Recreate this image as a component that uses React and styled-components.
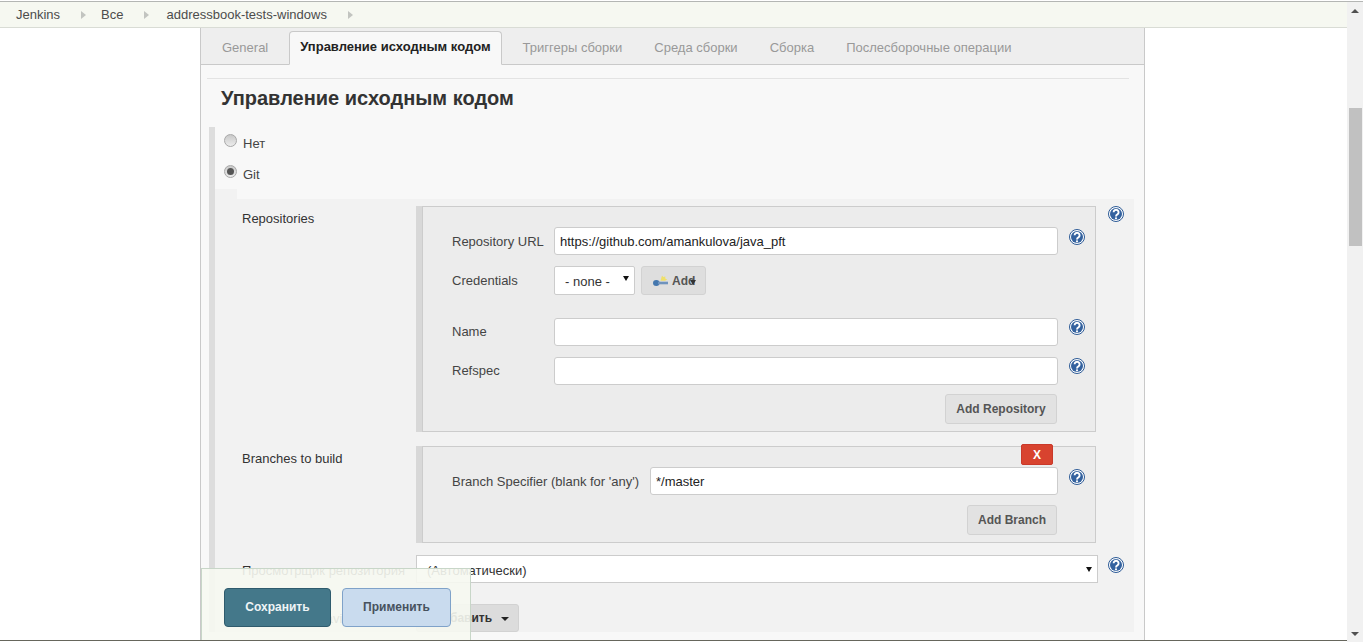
import React from "react";
import styled, { createGlobalStyle } from "styled-components";

const Global = createGlobalStyle`
  html, body { margin: 0; padding: 0; height: 642px; overflow: hidden; background: #fff; }
  body { font-family: "Liberation Sans", Arial, sans-serif; font-size: 13px; color: #333; }
  * { box-sizing: border-box; }
`;

const Shell = styled.div`display: flex; flex-direction: column; width: 1363px; height: 642px;`;
const TopEdge = styled.div`height: 2px; background: #fff; border-bottom: 1px solid #b4b6b4; flex: none;`;
const Body = styled.div`display: flex; flex: 1; min-height: 0;`;
const Viewport = styled.div`display: flex; flex-direction: column; flex: 1; min-width: 0;`;

const Breadcrumbs = styled.nav`
  height: 26px; flex: none; display: flex; align-items: center; padding: 0 0 0 16px;
  background: #f6f8f1; border-bottom: 1px solid #d9dcd5; font-size: 13px; color: #4c4c4c;
`;
const Crumb = styled.span`display: flex; align-items: center;`;
const CrumbArrow = styled.i`
  width: 0; height: 0; margin: 1px ${p => p.$after || 15}px 0 21px; border-style: solid;
  border-width: 4px 0 4px 5px; border-color: transparent transparent transparent #c2c4c0;
`;

const Main = styled.main`flex: 1; min-height: 0; position: relative; overflow: hidden; background: #fff;`;
const BottomEdge = styled.div`height: 2px; flex: none; background: #fff; border-top: 1px solid #66665c;`;

const Panel = styled.div`
  width: 945px; margin-left: 200px; height: 100%; background: #f8f8f8;
  border-left: 1px solid #c9c9c9; border-right: 1px solid #c9c9c9;
`;
const Tabs = styled.div`
  height: 37px; display: flex; align-items: flex-end; gap: 10px; padding: 0 0 0 10px;
  background: #eee; border-bottom: 1px solid #c9c9c9; font-size: 13px;
`;
const Tab = styled.div`
  height: ${p => (p.$active ? "34px" : "33px")}; padding: 0 10px ${p => (p.$active ? "3px" : "4px")}; display: flex; align-items: center;
  border: 1px solid ${p => (p.$active ? "#c9c9c9" : "transparent")};
  border-bottom: ${p => (p.$active ? "1px solid #f8f8f8" : "none")};
  border-radius: 4px 4px 0 0; margin-bottom: -1px;
  background: ${p => (p.$active ? "#f8f8f8" : "transparent")};
  color: ${p => (p.$active ? "#222" : "#999")};
  font-weight: ${p => (p.$active ? 700 : 400)};
`;
const Rule = styled.div`height: 1px; margin: 13px 15px 0 6px; background: #e3e3e3;`;
const Heading = styled.h2`
  margin: 0; padding: 8px 0 0 20px; height: 48px; font-size: 20px; line-height: 23px; font-weight: 700; color: #333;
`;
const Section = styled.section`
  margin-left: 8px; width: 925px; border-left: 6px solid #ddd;
`;
const RadioRow = styled.div`
  height: 31px; display: flex; align-items: center; padding-left: 9px; gap: 6px; color: #444;
`;
const Radio = styled.span`
  width: 13px; height: 13px; border-radius: 50%; flex: none; margin-bottom: 4px;
  border: 1px solid #a8a8a8; display: flex; align-items: center; justify-content: center;
  background: linear-gradient(#c9c9c9, #ececec);
  &::after {
    content: ""; width: 7px; height: 7px; border-radius: 50%;
    background: ${p => (p.$on ? "#555" : "transparent")};
  }
`;
const RadioText = styled.span`padding-top: 2px;`;
const Notch = styled.div`width: 22px; height: 10px; background: #f2f2f2;`;
const Block = styled.div`
  display: grid; grid-template-columns: 174px 682px 37px; background: #f2f2f2;
  padding: 7px 0 0 27px; row-gap: 0;
`;
const FieldLabel = styled.div`padding-top: ${p => p.$pt || 5}px; color: #333; line-height: 16px;`;
const Cell = styled.div`padding-bottom: ${p => p.$pb || 0}px;`;
const Repeater = styled.div`
  display: flex; gap: 1px; width: 680px; border-left: 6px solid #d8d8d8; 
`;
const Box = styled.div`
  flex: 1; position: relative; background: #ececec; border: 1px solid #ccc;
  padding: 20px 37px 7px 29px;
`;
const FormRow = styled.div`
  display: grid; grid-template-columns: ${p => p.$label || 102}px 1fr; position: relative;
  margin-bottom: ${p => p.$mb || 0}px; align-items: center; color: #444;
`;
const RowLabel = styled.span`padding-bottom: ${p => (p.$lift ? 2 : 0)}px;`;
const Input = styled.input`
  width: 100%; height: 28px; border: 1px solid #ccc; border-radius: 3px; background: #fff;
  padding: 0 5px; font: 13px "Liberation Sans", Arial, sans-serif; color: #222; outline: none; display: block;
`;
const Controls = styled.div`display: flex; gap: 6px;`;
const SelectWrap = styled.div`
  position: relative; width: ${p => p.$w}; height: ${p => p.$h}px; display: block;
  &::after {
    content: ""; position: absolute; right: 6px; top: ${p => p.$arrowTop}px; width: 0; height: 0;
    border-style: solid; border-width: 5px 3px 0 3px; border-color: #111 transparent transparent transparent;
    pointer-events: none;
  }
`;
const Select = styled.select`
  appearance: none; width: 100%; height: 100%; border: 1px solid #ccc; background: #fff; border-radius: ${p => p.$r || 0}px;
  padding: ${p => p.$pt || 1}px 0 0 10px; font: 13px "Liberation Sans", Arial, sans-serif; color: #333; outline: none;
`;
const Button = styled.button`
  display: flex; align-items: center; justify-content: center; height: ${p => p.$h || 30}px; width: ${p => p.$w || 90}px; padding: 0;
  border: 1px solid #d2d2d2; border-radius: 3px; background: #e2e2e2; color: #555;
  font: 700 12px "Liberation Sans", Arial, sans-serif;
`;
const AddKey = styled(Button)`
  position: relative; justify-content: flex-start; padding: 0 0 0 11px; width: 65px; background: #dedede; gap: 4px;
`;
const KeyCaret = styled.i`
  position: absolute; left: 48px; top: 13px; width: 0; height: 0; border-style: solid;
  border-width: 5px 3.5px 0 3.5px; border-color: #333 transparent transparent transparent;
`;
const ActionRow = styled.div`display: flex; justify-content: flex-end; margin: ${p => p.$mt}px 1px 0 0;`;
const RemoveButton = styled.button`
  position: absolute; right: 42px; top: -3px; width: 32px; height: 21px; border: 1px solid #c9392a;
  border-radius: 2px; background: #d8432f; color: #fff; font: 700 12px "Liberation Sans", Arial, sans-serif; padding: 0;
`;
const HelpSlot = styled.span`
  display: block; width: 16px; height: 16px; position: absolute; right: -27px; top: ${p => p.$top}px;
`;
const OuterHelp = styled.span`display: block; width: 16px; height: 16px; margin: ${p => p.$mt}px 0 0 10px;`;
const AddDropdown = styled.button`
  display: flex; align-items: center; gap: 9px; width: 103px; height: 28px; padding: 0 0 0 17px;
  background: #dcdcdc; border: 1px solid #d2d2d2; border-radius: 3px; color: #333;
  font: 700 12px "Liberation Sans", Arial, sans-serif;
  &::after {
    content: ""; width: 0; height: 0; border-style: solid; border-width: 4px 4px 0 4px;
    border-color: #222 transparent transparent transparent; margin-top: 2px;
  }
`;

const SaveBar = styled.div`
  position: absolute; left: 201px; bottom: 0; width: 270px; height: 72px;
  background: rgba(246, 248, 241, 0.9); border: 1px solid #c8d6c8; border-bottom: none;
  display: flex; gap: 11px; padding: 19px 0 0 22px;
`;
const SaveButton = styled.button`
  height: 39px; width: ${p => p.$w}px; border-radius: 4px; padding: 0 0 2px; font: 700 12px "Liberation Sans", Arial, sans-serif;
  background: ${p => (p.$primary ? "#44788a" : "#c9dbee")};
  border: 1px solid ${p => (p.$primary ? "#2f5b6d" : "#7fa2c9")};
  color: ${p => (p.$primary ? "#eef4f6" : "#47525e")};
`;

const Scrollbar = styled.div`
  width: 16px; flex: none; background: #f1f1f1; display: flex; flex-direction: column; align-items: center;
`;
const ScrollButton = styled.div`
  height: 17px; width: 100%; flex: none; display: flex; align-items: center; justify-content: center;
  &::after {
    content: ""; width: 0; height: 0; border-style: solid;
    border-width: ${p => (p.$up ? "0 4px 4px 4px" : "4px 4px 0 4px")};
    border-color: ${p => (p.$up ? "transparent transparent #505050 transparent" : "#505050 transparent transparent transparent")};
  }
`;
const ScrollTrack = styled.div`flex: 1; width: 100%; padding: 89px 1px 0 2px;`;
const ScrollThumb = styled.div`height: 138px; background: #c1c1c1;`;

const HelpIcon = () => (
  <svg width="16" height="16" viewBox="0 0 16 16" aria-hidden="true">
    <circle cx="8" cy="8" r="7.5" fill="#fff" stroke="#2c5a96" strokeWidth="1" />
    <circle cx="8" cy="8" r="6" fill="#34629f" />
    <path d="M5.6 6.300a2.500 2.500 0 1 1 3.800 2.100c-.9.5-1.400 1-1.400 2" fill="none" stroke="#fff" strokeWidth="1.900" />
    <circle cx="8" cy="12.300" r="1.100" fill="#fff" />
  </svg>
);

const KeyIcon = () => (
  <svg width="15" height="12" viewBox="0 0 15 12" aria-hidden="true">
    <path d="M9 0.500l1.200 1.500 2.200-.6-.2 2 2 1-2 1.400H7.500z" fill="#efe06a" />
    <ellipse cx="3.300" cy="8" rx="3.300" ry="3" fill="#4477ae" />
    <rect x="5" y="6.700" width="10" height="2.600" fill="#6f93bd" />
  </svg>
);

export default function App() {
  return (
    <Shell>
      <Global />
      <TopEdge />
      <Body>
        <Viewport>
          <Breadcrumbs>
            <Crumb>Jenkins<CrumbArrow /></Crumb>
            <Crumb>Все<CrumbArrow $after={17} /></Crumb>
            <Crumb>addressbook-tests-windows<CrumbArrow /></Crumb>
          </Breadcrumbs>
          <Main>
            <Panel>
              <Tabs>
                <Tab>General</Tab>
                <Tab $active>Управление исходным кодом</Tab>
                <Tab>Триггеры сборки</Tab>
                <Tab>Среда сборки</Tab>
                <Tab>Сборка</Tab>
                <Tab>Послесборочные операции</Tab>
              </Tabs>
              <Rule />
              <Heading>Управление исходным кодом</Heading>
              <Section>
                <RadioRow><Radio /><RadioText>Нет</RadioText></RadioRow>
                <RadioRow><Radio $on /><RadioText>Git</RadioText></RadioRow>
                <Notch />
                <Block>
                  <FieldLabel>Repositories</FieldLabel>
                  <Cell $pb={14}>
                    <Repeater>
                      <Box>
                        <FormRow $mb={11}>
                          <RowLabel>Repository URL</RowLabel>
                          <Input readOnly value="https://github.com/amankulova/java_pft" />
                          <HelpSlot $top={2}><HelpIcon /></HelpSlot>
                        </FormRow>
                        <FormRow $mb={23}>
                          <RowLabel>Credentials</RowLabel>
                          <Controls>
                            <SelectWrap $w="81px" $h={29} $arrowTop={10}>
                              <Select $r={2} defaultValue="none"><option value="none">- none -</option></Select>
                            </SelectWrap>
                            <AddKey $h={29}><KeyIcon />Add<KeyCaret /></AddKey>
                          </Controls>
                        </FormRow>
                        <FormRow $mb={11}>
                          <RowLabel $lift>Name</RowLabel>
                          <Input readOnly value="" />
                          <HelpSlot $top={1}><HelpIcon /></HelpSlot>
                        </FormRow>
                        <FormRow>
                          <RowLabel $lift>Refspec</RowLabel>
                          <Input readOnly value="" />
                          <HelpSlot $top={1}><HelpIcon /></HelpSlot>
                        </FormRow>
                        <ActionRow $mt={9}><Button $w={112}>Add Repository</Button></ActionRow>
                      </Box>
                    </Repeater>
                  </Cell>
                  <OuterHelp $mt={0}><HelpIcon /></OuterHelp>

                  <FieldLabel>Branches to build</FieldLabel>
                  <Cell $pb={12}>
                    <Repeater>
                      <Box>
                        <RemoveButton>X</RemoveButton>
                        <FormRow $label={198}>
                          <RowLabel>Branch Specifier (blank for 'any')</RowLabel>
                          <Input readOnly value="*/master" />
                          <HelpSlot $top={2}><HelpIcon /></HelpSlot>
                        </FormRow>
                        <ActionRow $mt={10}><Button>Add Branch</Button></ActionRow>
                      </Box>
                    </Repeater>
                  </Cell>
                  <span />

                  <FieldLabel $pt={8}>Просмотрщик репозитория</FieldLabel>
                  <Cell $pb={21}>
                    <SelectWrap $w="682px" $h={28} $arrowTop={12}>
                      <Select $pt={3} defaultValue="auto"><option value="auto">(Автоматически)</option></Select>
                    </SelectWrap>
                  </Cell>
                  <OuterHelp $mt={2}><HelpIcon /></OuterHelp>

                  <FieldLabel $pt={7}>Additional Behaviours</FieldLabel>
                  <Cell><AddDropdown>Добавить</AddDropdown></Cell>
                  <span />
                </Block>
              </Section>
            </Panel>
            <SaveBar>
              <SaveButton $primary $w={107}>Сохранить</SaveButton>
              <SaveButton $w={109}>Применить</SaveButton>
            </SaveBar>
          </Main>
          <BottomEdge />
        </Viewport>
        <Scrollbar>
          <ScrollButton $up />
          <ScrollTrack><ScrollThumb /></ScrollTrack>
          <ScrollButton />
        </Scrollbar>
      </Body>
    </Shell>
  );
}
